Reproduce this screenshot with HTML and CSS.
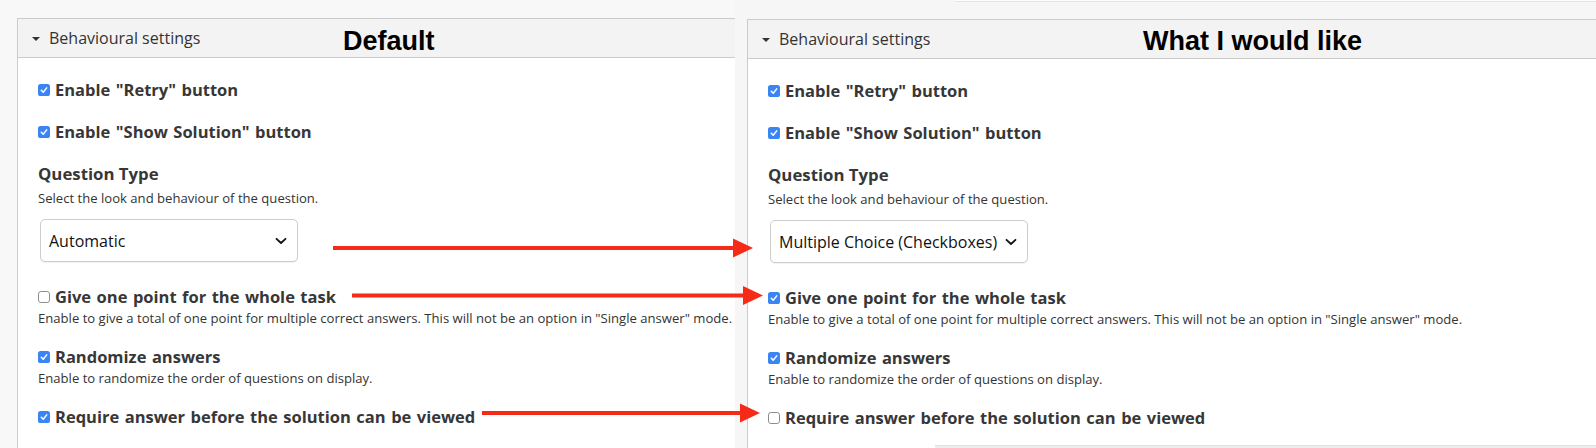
FILE: index.html
```html
<!DOCTYPE html>
<html lang="en">
<head>
<meta charset="utf-8">
<title>Behavioural settings</title>
<link rel="stylesheet" href="styles.css">
</head>
<body>
<div class="stage">
  <section class="shot shot-left">
    <div class="panel">
      <div class="panel-head">
        <span class="caret"></span>
        <span class="head-text">Behavioural settings</span>
        <span class="note note-left">Default</span>
      </div>
      <div class="panel-body">
        <label class="check-row row-first"><span class="box on"><svg viewBox="0 0 12 12"><rect x="0" y="0" width="12" height="12" rx="2.6" class="box-fill"/><path d="M3.3 6.2 L5.2 8.2 L8.7 3.9" class="tick"/></svg></span>Enable "Retry" button</label>
        <label class="check-row row-next"><span class="box on"><svg viewBox="0 0 12 12"><rect x="0" y="0" width="12" height="12" rx="2.6" class="box-fill"/><path d="M3.3 6.2 L5.2 8.2 L8.7 3.9" class="tick"/></svg></span>Enable "Show Solution" button</label>
        <div class="field-title">Question Type</div>
        <div class="desc">Select the look and behaviour of the question.</div>
        <div class="select-box"><span class="select-text">Automatic</span><svg class="chev" viewBox="0 0 12 8"><path d="M1.5 1.8 L6 6 L10.5 1.8"/></svg></div>
        <label class="check-row row-after-select"><span class="box off"><svg viewBox="0 0 12 12"><rect x="0.5" y="0.5" width="11" height="11" rx="2.4" class="box-empty"/></svg></span>Give one point for the whole task</label>
        <div class="desc desc-tight">Enable to give a total of one point for multiple correct answers. This will not be an option in "Single answer" mode.</div>
        <label class="check-row row-next"><span class="box on"><svg viewBox="0 0 12 12"><rect x="0" y="0" width="12" height="12" rx="2.6" class="box-fill"/><path d="M3.3 6.2 L5.2 8.2 L8.7 3.9" class="tick"/></svg></span>Randomize answers</label>
        <div class="desc desc-tight">Enable to randomize the order of questions on display.</div>
        <label class="check-row row-last"><span class="box on"><svg viewBox="0 0 12 12"><rect x="0" y="0" width="12" height="12" rx="2.6" class="box-fill"/><path d="M3.3 6.2 L5.2 8.2 L8.7 3.9" class="tick"/></svg></span>Require answer before the solution can be viewed</label>
      </div>
    </div>
  </section>

  <section class="shot shot-right">
    <div class="top-strip"></div>
    <div class="panel">
      <div class="panel-head">
        <span class="caret"></span>
        <span class="head-text">Behavioural settings</span>
        <span class="note note-right">What I would like</span>
      </div>
      <div class="panel-body">
        <label class="check-row row-first"><span class="box on"><svg viewBox="0 0 12 12"><rect x="0" y="0" width="12" height="12" rx="2.6" class="box-fill"/><path d="M3.3 6.2 L5.2 8.2 L8.7 3.9" class="tick"/></svg></span>Enable "Retry" button</label>
        <label class="check-row row-next"><span class="box on"><svg viewBox="0 0 12 12"><rect x="0" y="0" width="12" height="12" rx="2.6" class="box-fill"/><path d="M3.3 6.2 L5.2 8.2 L8.7 3.9" class="tick"/></svg></span>Enable "Show Solution" button</label>
        <div class="field-title">Question Type</div>
        <div class="desc">Select the look and behaviour of the question.</div>
        <div class="select-box"><span class="select-text">Multiple Choice (Checkboxes)</span><svg class="chev" viewBox="0 0 12 8"><path d="M1.5 1.8 L6 6 L10.5 1.8"/></svg></div>
        <label class="check-row row-after-select"><span class="box on"><svg viewBox="0 0 12 12"><rect x="0" y="0" width="12" height="12" rx="2.6" class="box-fill"/><path d="M3.3 6.2 L5.2 8.2 L8.7 3.9" class="tick"/></svg></span>Give one point for the whole task</label>
        <div class="desc desc-tight">Enable to give a total of one point for multiple correct answers. This will not be an option in "Single answer" mode.</div>
        <label class="check-row row-next"><span class="box on"><svg viewBox="0 0 12 12"><rect x="0" y="0" width="12" height="12" rx="2.6" class="box-fill"/><path d="M3.3 6.2 L5.2 8.2 L8.7 3.9" class="tick"/></svg></span>Randomize answers</label>
        <div class="desc desc-tight">Enable to randomize the order of questions on display.</div>
        <label class="check-row row-last"><span class="box off"><svg viewBox="0 0 12 12"><rect x="0.5" y="0.5" width="11" height="11" rx="2.4" class="box-empty"/></svg></span>Require answer before the solution can be viewed</label>
      </div>
      <div class="bottom-strip"></div>
    </div>
  </section>

  <svg class="arrows" viewBox="0 0 1596 448" width="1596" height="448">
    <line x1="333" y1="248" x2="736" y2="248" class="arrow-line"/>
    <polygon points="733,238.5 753,248 733,257.5" class="arrow-head"/>
    <line x1="352" y1="295.5" x2="746" y2="295.5" class="arrow-line"/>
    <polygon points="743,286 763,295.5 743,305" class="arrow-head"/>
    <line x1="482" y1="413" x2="743" y2="413" class="arrow-line"/>
    <polygon points="740,403.5 760,413 740,422.5" class="arrow-head"/>
  </svg>
</div>
</body>
</html>
```

FILE: styles.css
```css
html, body {
  margin: 0;
  padding: 0;
}

body {
  background: #f8f8f8;
  font-family: "Open Sans", "Noto Sans", sans-serif;
  color: #333;
}

.stage {
  position: relative;
  display: flex;
  width: 1596px;
  height: 448px;
  overflow: hidden;
}

.shot {
  display: flex;
  flex-direction: column;
  box-sizing: border-box;
  background: #f8f8f8;
}

.shot-left {
  width: 735px;
  flex: 0 0 735px;
  padding: 18px 0 0 17px;
}

.shot-right {
  flex: 1 1 auto;
  padding: 0 0 0 12px;
  background: #f6f6f6;
}

.top-strip {
  height: 1px;
  margin-left: 208px;
  background: #fdfdfd;
  border-bottom: 1px solid #e4e4e4;
  margin-bottom: 17px;
}

.panel {
  flex: 1 1 auto;
  background: #fff;
  border-left: 1px solid #cbcbcb;
  border-top: 1px solid #cbcbcb;
  display: flex;
  flex-direction: column;
}

.panel-head {
  position: relative;
  height: 38px;
  flex: 0 0 38px;
  background: #f3f3f3;
  border-bottom: 1px solid #cbcbcb;
  display: flex;
  align-items: center;
  padding-left: 14px;
}

.caret {
  width: 0;
  height: 0;
  border-left: 4px solid transparent;
  border-right: 4px solid transparent;
  border-top: 4px solid #333;
  margin-top: 2px;
}

.head-text {
  margin-left: 9px;
  font-size: 16px;
  color: #333;
  line-height: 22px;
}

.note {
  position: absolute;
  top: 9px;
  font-family: "Liberation Sans", Arial, sans-serif;
  font-weight: 700;
  font-size: 27px;
  line-height: 27px;
  color: #000;
  white-space: nowrap;
}

.note-left {
  left: 325px;
}

.note-right {
  top: 8px;
  left: 395px;
}

.panel-body {
  display: flex;
  flex-direction: column;
  align-items: flex-start;
  padding: 20px 0 0 20px;
}

.bottom-strip {
  margin-top: auto;
  margin-left: 187px;
  height: 2px;
  background: #ededed;
  border-top: 1px solid #e0e0e0;
}

.check-row {
  display: flex;
  align-items: center;
  font-size: 16.5px;
  font-weight: 700;
  line-height: 24px;
  word-spacing: 1.2px;
  color: #373737;
  white-space: nowrap;
}

.row-next {
  margin-top: 17.5px;
}

.row-after-select {
  margin-top: 23px;
}

.row-last {
  margin-top: 18.5px;
}

.box {
  display: inline-flex;
  width: 12px;
  height: 12px;
  margin-right: 5px;
}

.box svg {
  width: 12px;
  height: 12px;
  display: block;
}

.box-fill {
  fill: #3a85f3;
}

.tick {
  fill: none;
  stroke: #fff;
  stroke-width: 1.5;
  stroke-linecap: round;
  stroke-linejoin: round;
}

.box-empty {
  fill: #fff;
  stroke: #8d8d8d;
  stroke-width: 1;
}

.field-title {
  margin-top: 18px;
  font-size: 16.8px;
  font-weight: 700;
  line-height: 24px;
  color: #373737;
}

.desc {
  margin-top: 3px;
  font-size: 13.1px;
  line-height: 18px;
  color: #333;
  white-space: nowrap;
}

.desc-tight {
  margin-top: 0;
}

.select-box {
  margin: 12.5px 0 0 2px;
  box-sizing: border-box;
  width: 258px;
  height: 43px;
  border: 1px solid #cdcdcd;
  border-radius: 5px;
  background: #fff;
  box-shadow: 0 1px 1px rgba(0, 0, 0, 0.06);
  display: flex;
  align-items: center;
  justify-content: space-between;
  padding: 0 10px 0 8px;
}

.select-text {
  font-size: 16px;
  color: #111;
  white-space: nowrap;
}

.chev {
  width: 12px;
  height: 8px;
  flex: 0 0 12px;
}

.chev path {
  fill: none;
  stroke: #111;
  stroke-width: 1.8;
  stroke-linecap: round;
  stroke-linejoin: round;
}

.arrows {
  position: absolute;
  left: 0;
  top: 0;
  pointer-events: none;
}

.arrow-line {
  stroke: #f52b17;
  stroke-width: 4;
}

.arrow-head {
  fill: #f52b17;
}
```
